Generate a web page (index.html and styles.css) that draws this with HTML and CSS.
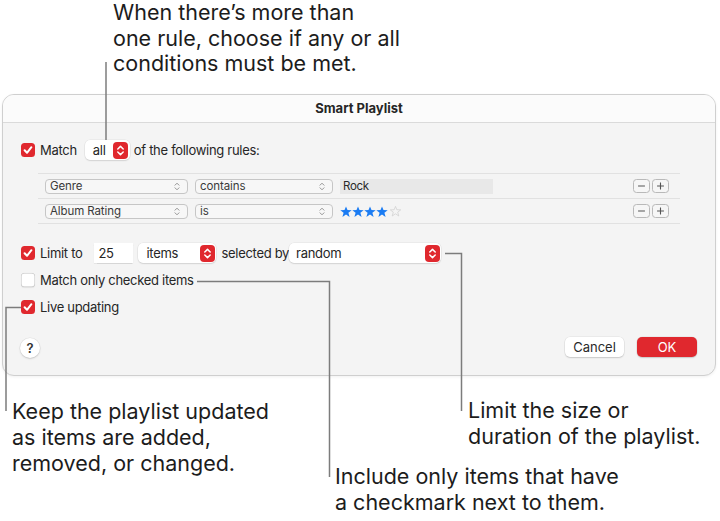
FILE: index.html
```html
<!DOCTYPE html>
<html lang="en">
<head>
  <meta charset="UTF-8" />
  <meta name="viewport" content="width=device-width, initial-scale=1.0" />
  <title>Smart Playlist</title>
  <link rel="stylesheet" href="styles.css">
</head>
<body>

  <svg class="defs" width="0" height="0">
    <symbol id="star" viewBox="0 0 12 12">
      <polygon points="6,0.4 7.5,4.1 11.7,4.2 8.4,6.8 9.6,10.9 6,8.5 2.4,10.9 3.6,6.8 0.3,4.2 4.5,4.1" />
    </symbol>
    <symbol id="tick" viewBox="0 0 14 14">
      <path d="M3.6 7.3 L6 9.8 L10.4 4.2" fill="none" stroke="#fff" stroke-width="2" stroke-linecap="round" stroke-linejoin="round" />
    </symbol>
    <symbol id="updown" viewBox="0 0 15 17">
      <path d="M4.8 7 L7.5 4.4 L10.2 7 M4.8 10 L7.5 12.6 L10.2 10" fill="none" stroke="#fff" stroke-width="1.5" stroke-linecap="round" stroke-linejoin="round" />
    </symbol>
    <symbol id="updown-sm" viewBox="0 0 6 9">
      <path d="M1 3.2 L3 1.2 L5 3.2 M1 5.8 L3 7.8 L5 5.8" fill="none" stroke="#8a8a8a" stroke-width="0.9" stroke-linecap="round" stroke-linejoin="round" />
    </symbol>
  </svg>

  <div class="page">

    <p class="note note-top">When there’s more than<br>one rule, choose if any or all<br>conditions must be met.</p>

    <div class="dialog">
      <div class="titlebar">Smart Playlist</div>

      <div class="content">
        <div class="row">
          <span class="check on"><svg><use href="#tick"/></svg></span>
          <span class="label">Match</span>
          <span class="popup popup-all">all<span class="stepper"><svg><use href="#updown"/></svg></span></span>
          <span>of the following rules:</span>
        </div>

        <div class="rules">
          <div class="rule">
            <span class="select select-field">Genre<svg><use href="#updown-sm"/></svg></span>
            <span class="select select-op">contains<svg><use href="#updown-sm"/></svg></span>
            <span class="value">Rock</span>
            <span class="pm">
              <button class="pm-btn"><svg viewBox="0 0 17 14"><path d="M4.5 7 H12.5" /></svg></button>
              <button class="pm-btn"><svg viewBox="0 0 17 14"><path d="M4.5 7 H12.5 M8.5 3 V11" /></svg></button>
            </span>
          </div>
          <div class="rule">
            <span class="select select-field">Album Rating<svg><use href="#updown-sm"/></svg></span>
            <span class="select select-op">is<svg><use href="#updown-sm"/></svg></span>
            <span class="stars">
              <svg><use href="#star"/></svg>
              <svg><use href="#star"/></svg>
              <svg><use href="#star"/></svg>
              <svg><use href="#star"/></svg>
              <svg class="empty"><use href="#star"/></svg>
            </span>
            <span class="pm">
              <button class="pm-btn"><svg viewBox="0 0 17 14"><path d="M4.5 7 H12.5" /></svg></button>
              <button class="pm-btn"><svg viewBox="0 0 17 14"><path d="M4.5 7 H12.5 M8.5 3 V11" /></svg></button>
            </span>
          </div>
        </div>

        <div class="row row-limit">
          <span class="check on"><svg><use href="#tick"/></svg></span>
          <span class="label label-limit">Limit to</span>
          <span class="field">25</span>
          <span class="popup popup-items">items<span class="stepper"><svg><use href="#updown"/></svg></span></span>
          <span>selected by</span>
          <span class="popup popup-random">random<span class="stepper"><svg><use href="#updown"/></svg></span></span>
        </div>

        <div class="row row-next">
          <span class="check"></span>
          <span class="label">Match only checked items</span>
        </div>

        <div class="row row-next">
          <span class="check on"><svg><use href="#tick"/></svg></span>
          <span class="label">Live updating</span>
        </div>

        <div class="footer">
          <button class="help">?</button>
          <div class="actions">
            <button class="btn">Cancel</button>
            <button class="btn btn-ok">OK</button>
          </div>
        </div>
      </div>
    </div>

    <div class="notes">
      <p class="note note-live">Keep the playlist updated<br>as items are added,<br>removed, or changed.</p>
      <p class="note note-checked">Include only items that have<br>a checkmark next to them.</p>
      <p class="note note-limit">Limit the size or<br>duration of the playlist.</p>
    </div>

    <!-- leader lines from each note to its control -->
    <svg class="leaders" viewBox="0 0 720 521">
      <path d="M106 62 V140" />
      <path d="M21 307.5 H6 V411" />
      <path d="M197 281.5 H329.5 V477" />
      <path d="M445 253.5 H461.5 V411" />
    </svg>

  </div>

</body>
</html>
```

FILE: styles.css
```css
* {
  box-sizing: border-box;
}
body {
  margin: 0;
  background: #fff;
  font-family: Inter, "Noto Sans", sans-serif;
  color: #1f1f1f;
}
.defs {
  position: absolute;
}
.page {
  position: relative;
  width: 720px;
  height: 521px;
  overflow: hidden;
}

/* callout text */
.note {
  margin: 0;
  font-size: 21.5px;
  line-height: 26px;
  color: #1c1c1c;
  white-space: nowrap;
}
.note-top {
  height: 94px;
  padding-left: 113px;
  line-height: 25.5px;
}
.notes {
  display: grid;
  grid-template-columns: 323px 133px 1fr;
  padding: 22px 0 0 12px;
}
.note-checked {
  margin-top: 65px;
}
.note-limit {
  margin-top: -1px;
}
.leaders {
  position: absolute;
  left: 0;
  top: 0;
  width: 720px;
  height: 521px;
  fill: none;
  stroke: #7c7c7c;
  stroke-width: 1.5;
  pointer-events: none;
}

/* window */
.dialog {
  margin-left: 2px;
  width: 714px;
  border: 1px solid #cfcfcf;
  border-radius: 12px;
  background: #f4f4f4;
  overflow: hidden;
  box-shadow: 0 1px 3px rgba(0,0,0,0.06);
}
.titlebar {
  height: 28px;
  line-height: 27px;
  text-align: center;
  font-size: 13px;
  font-weight: 700;
  color: #262626;
  background: #fbfbfb;
  border-bottom: 1px solid #dadada;
}
.content {
  padding: 17px 18px 18px;
  font-size: 13px;
  letter-spacing: -0.3px;
  color: #262626;
}
.row {
  display: flex;
  align-items: center;
  height: 20px;
}
.row-limit {
  margin-top: 19px;
}
.row-next {
  margin-top: 7px;
}
.label {
  margin-right: 8px;
}
.label-limit {
  margin-right: 12px;
}

/* checkboxes */
.check {
  flex: none;
  width: 14px;
  height: 14px;
  margin-right: 5px;
  border-radius: 3.5px;
  background: #fff;
  box-shadow: inset 0 0 0 0.5px rgba(0,0,0,0.25), 0 0.5px 1px rgba(0,0,0,0.08);
}
.check svg {
  display: block;
  width: 14px;
  height: 14px;
}
.check.on {
  background: #e0282e;
  box-shadow: none;
}

/* pop-up buttons with red steppers */
.popup {
  display: flex;
  align-items: center;
  justify-content: space-between;
  height: 20px;
  padding: 0 1.5px 0 8px;
  margin-right: 5px;
  background: #fff;
  border-radius: 5px;
  box-shadow: 0 0 0 0.5px rgba(0,0,0,0.07), 0 1px 1.5px rgba(0,0,0,0.1);
}
.popup-all {
  width: 45px;
  margin-right: 4px;
}
.popup-items {
  width: 78px;
}
.popup-random {
  width: 152px;
  padding-left: 7px;
}
.stepper {
  width: 15px;
  height: 17px;
  border-radius: 4px;
  background: #e0282e;
}
.stepper svg {
  display: block;
  width: 15px;
  height: 17px;
}
.field {
  display: flex;
  align-items: center;
  width: 39px;
  height: 20px;
  padding-left: 4px;
  margin-right: 5px;
  background: #fff;
  box-shadow: 0 0.5px 1px rgba(0,0,0,0.12);
}

/* rule table */
.rules {
  margin: 13px 17px 0;
  border-bottom: 1px solid #e1e1e1;
}
.rule {
  display: flex;
  align-items: center;
  height: 25px;
  padding: 0 11px 0 7px;
  border-top: 1px solid #e1e1e1;
}
.select {
  display: flex;
  align-items: center;
  justify-content: space-between;
  height: 15px;
  padding: 0 7px 0 4px;
  margin-right: 7px;
  font-size: 11.5px;
  letter-spacing: -0.1px;
  color: #3a3a3a;
  background: #f7f7f7;
  border: 1px solid #c6c6c6;
  border-radius: 4px;
}
.select svg {
  width: 6px;
  height: 9px;
}
.select-field {
  width: 143px;
}
.select-op {
  width: 138px;
}
.value {
  width: 153px;
  height: 15px;
  padding-left: 3px;
  font-size: 11.5px;
  line-height: 15px;
  color: #2a2a2a;
  background: #e8e8e8;
}
.stars {
  display: flex;
  margin-top: 1px;
}
.stars svg {
  width: 12px;
  height: 12px;
  fill: #1b7cf3;
}
.stars svg.empty {
  margin-left: 2px;
  width: 11px;
  height: 11px;
  fill: none;
  stroke: #cfcfcf;
  stroke-width: 0.8;
}
.pm {
  display: flex;
  gap: 2px;
  margin-left: auto;
}
.pm-btn {
  width: 17px;
  height: 14px;
  padding: 0;
  background: #f6f6f6;
  border: 1px solid #b9b9b9;
  border-radius: 3.5px;
}
.pm-btn svg {
  display: block;
  width: 15px;
  height: 12px;
  stroke: #555;
  stroke-width: 1.3;
}

/* bottom buttons */
.footer {
  display: flex;
  align-items: center;
  justify-content: space-between;
  margin-top: 20px;
  height: 20px;
}
.help {
  width: 20px;
  height: 20px;
  margin-left: -1px;
  margin-top: 2px;
  padding: 0;
  border: none;
  border-radius: 50%;
  background: #fff;
  font-family: Inter, sans-serif;
  font-size: 13px;
  font-weight: 600;
  color: #333;
  box-shadow: 0 0 0 0.5px rgba(0,0,0,0.08), 0 1px 2px rgba(0,0,0,0.14);
}
.actions {
  display: flex;
  gap: 13px;
}
.btn {
  width: 59px;
  height: 20px;
  padding: 0;
  border: none;
  border-radius: 5px;
  background: #fff;
  font-family: Inter, sans-serif;
  font-size: 13px;
  color: #2a2a2a;
  box-shadow: 0 0 0 0.5px rgba(0,0,0,0.08), 0 1px 1.5px rgba(0,0,0,0.14);
}
.btn-ok {
  width: 60px;
  background: #e0282e;
  color: #fff;
}
```
